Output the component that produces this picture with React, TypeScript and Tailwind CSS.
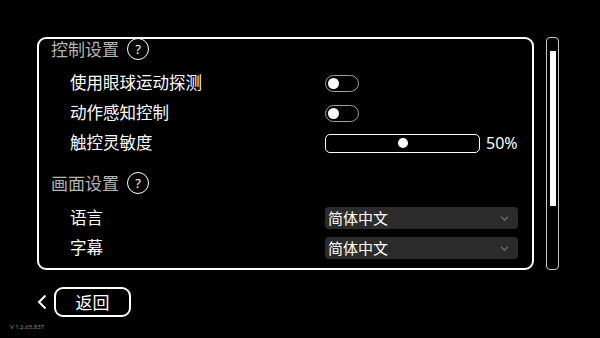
import React from "react";

const font = { fontFamily: '"Noto Sans", "Noto Sans CJK SC", sans-serif' };

function Help() {
  return (
    <span className="flex size-[22px] items-center justify-center rounded-full border-[1.5px] border-white text-[13px] leading-none text-white">
      ?
    </span>
  );
}

function SectionHeader({ title, className = "" }: { title: string; className?: string }) {
  return (
    <div className={`flex h-[22px] items-center gap-[8px] pl-[12px] ${className}`}>
      <span className="text-[17px] leading-none text-[#b4b4b4]">{title}</span>
      <Help />
    </div>
  );
}

function Toggle() {
  return (
    <div className="flex h-[17px] w-[34px] items-center rounded-full border-[1.5px] border-[#a0a0a0] pl-[2px]">
      <span className="size-[11px] rounded-full bg-white" />
    </div>
  );
}

function Slider({ value }: { value: number }) {
  return (
    <div className="flex items-center gap-[6px]">
      <div className="relative h-[19px] w-[155px] rounded-[5px] border-[1.5px] border-white">
        <span
          className="absolute top-1/2 size-[10px] -translate-x-1/2 -translate-y-1/2 rounded-full bg-white"
          style={{ left: `${value}%` }}
        />
      </div>
      <span className="text-[16px] leading-none text-white">{value}%</span>
    </div>
  );
}

function Select({ value }: { value: string }) {
  return (
    <div className="flex h-[22px] w-[193px] items-center justify-between rounded-[4px] bg-[#2b2b2b] pl-[3px] pr-[9px]">
      <span className="text-[15px] leading-none text-white">{value}</span>
      <svg viewBox="0 0 10 6" className="h-[5px] w-[9px]">
        <path d="M1 1 L5 5 L9 1" stroke="#6e6e6e" strokeWidth="1.6" fill="none" />
      </svg>
    </div>
  );
}

function Row({ label, children }: { label: string; children: React.ReactNode }) {
  return (
    <div className="flex h-[30px] items-center pl-[31px]">
      <span className="w-[255px] text-[16.5px] leading-none text-white">{label}</span>
      {children}
    </div>
  );
}

export default function App() {
  return (
    <div className="flex h-[338px] w-[600px] flex-col overflow-hidden bg-black" style={font}>
      <div className="flex gap-[12px] pl-[37px] pt-[37px]">
        {/* settings panel */}
        <div className="h-[233px] w-[497px] overflow-hidden rounded-[9px] border-2 border-white">
          <SectionHeader title="控制设置" className="-mt-[1px]" />
          <div className="mt-[8px]">
            <Row label="使用眼球运动探测">
              <Toggle />
            </Row>
            <Row label="动作感知控制">
              <Toggle />
            </Row>
            <Row label="触控灵敏度">
              <Slider value={50} />
            </Row>
          </div>
          <SectionHeader title="画面设置" className="mt-[14px]" />
          <div className="mt-[9px]">
            <Row label="语言">
              <Select value="简体中文" />
            </Row>
            <Row label="字幕">
              <Select value="简体中文" />
            </Row>
          </div>
        </div>

        {/* scrollbar */}
        <div className="flex h-[233px] w-[13px] justify-center rounded-[4px] border-[1.5px] border-[#c8c8c8] pt-[13px]">
          <div className="h-[155px] w-[6px] bg-white" />
        </div>
      </div>

      <div className="mt-[17px] flex items-center gap-[7px] pl-[37px]">
        <svg viewBox="0 0 10 16" className="h-[16px] w-[10px]">
          <path d="M8.5 1.5 L2 8 L8.5 14.5" stroke="white" strokeWidth="2" fill="none" />
        </svg>
        <button className="flex h-[30px] w-[77px] items-center justify-center rounded-[9px] border-2 border-white text-[17px] leading-none text-white">
          返回
        </button>
      </div>

      <div className="mt-[7px] pl-[10px] text-[6px] leading-none text-[#8a8a8a]">V 1.2.65.837</div>
    </div>
  );
}
